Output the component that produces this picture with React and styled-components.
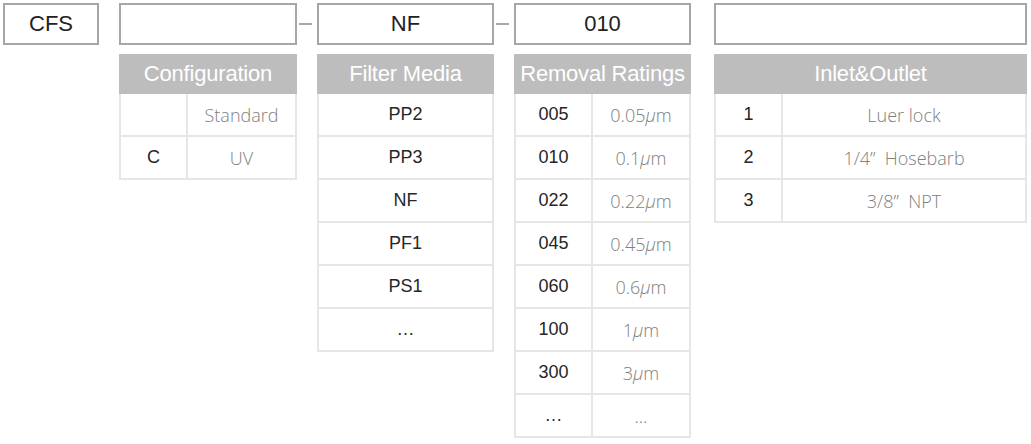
import React from 'react';
import styled, { createGlobalStyle } from 'styled-components';

const GlobalStyle = createGlobalStyle`
  body {
    margin: 0;
    background: #ffffff;
    font-family: 'Liberation Sans', Arial, sans-serif;
  }
`;

const segments = [
  {
    code: '',
    title: 'Configuration',
    width: 178,
    split: 65,
    joint: true,
    rows: [
      ['', 'Standard'],
      ['C', 'UV'],
    ],
  },
  {
    code: 'NF',
    title: 'Filter Media',
    width: 177,
    joint: true,
    rows: [['PP2'], ['PP3'], ['NF'], ['PF1'], ['PS1'], ['…']],
  },
  {
    code: '010',
    title: 'Removal Ratings',
    width: 177,
    split: 75,
    gapAfter: 23,
    rows: [
      ['005', '0.05', 'm'],
      ['010', '0.1', 'm'],
      ['022', '0.22', 'm'],
      ['045', '0.45', 'm'],
      ['060', '0.6', 'm'],
      ['100', '1', 'm'],
      ['300', '3', 'm'],
      ['…', '…'],
    ],
  },
  {
    code: '',
    title: 'Inlet&Outlet',
    width: 313,
    split: 65,
    rows: [
      ['1', 'Luer lock'],
      ['2', '1/4”  Hosebarb'],
      ['3', '3/8”  NPT'],
    ],
  },
];

const App = () => (
  <>
    <GlobalStyle />
    <Page>
      <Column $width={96}>
        <CodeBox>CFS</CodeBox>
      </Column>
      <Joint />
      {segments.map((seg, i) => (
        <React.Fragment key={seg.title}>
          <Column $width={seg.width}>
            <CodeBox>{seg.code}</CodeBox>
            <Header>{seg.title}</Header>
            <Table $split={seg.split}>
              {seg.rows.map((row, r) =>
                row.length === 1 ? (
                  <Cell key={r}>{row[0]}</Cell>
                ) : (
                  <React.Fragment key={r}>
                    <Cell>{row[0]}</Cell>
                    <Value>
                      {row[1]}
                      {row[2] && (
                        <>
                          <Mu>μ</Mu>
                          {row[2]}
                        </>
                      )}
                    </Value>
                  </React.Fragment>
                )
              )}
            </Table>
          </Column>
          {i < segments.length - 1 && (
            <Joint $line={seg.joint} $width={seg.gapAfter} />
          )}
        </React.Fragment>
      ))}
    </Page>
  </>
);

export default App;

const Page = styled.div`
  display: flex;
  align-items: flex-start;
  padding: 3px;
`;

const Column = styled.div`
  display: flex;
  flex-direction: column;
  flex: none;
  width: ${(p) => p.$width}px;
`;

const Joint = styled.div`
  flex: none;
  width: ${(p) => p.$width || 20}px;
  height: 42px;
  display: flex;
  align-items: center;
  &::before {
    content: '';
    display: ${(p) => (p.$line ? 'block' : 'none')};
    margin-left: 2px;
    width: 13px;
    height: 2px;
    background: #a8a8ac;
  }
`;

const CodeBox = styled.div`
  box-sizing: border-box;
  height: 42px;
  border: 2px solid #a6a6aa;
  display: flex;
  align-items: center;
  justify-content: center;
  font-size: 22px;
  color: #222222;
`;

const Header = styled.div`
  margin-top: 9px;
  height: 40px;
  background: #bdbdbd;
  color: #ffffff;
  font-size: 22px;
  display: flex;
  align-items: center;
  justify-content: center;
  white-space: nowrap;
  letter-spacing: -0.2px;
`;

const Table = styled.div`
  display: grid;
  grid-template-columns: ${(p) => (p.$split ? `${p.$split}px 1fr` : '1fr')};
  grid-auto-rows: 41px;
  gap: 2px;
  padding: 0 2px 2px 2px;
  background: #e6e6e6;
`;

const Cell = styled.div`
  background: #ffffff;
  display: flex;
  align-items: center;
  justify-content: center;
  font-size: 18px;
  color: #262626;
`;

const Value = styled(Cell)`
  font-family: 'Open Sans', 'Noto Sans', sans-serif;
  font-weight: 300;
  font-size: 18px;
  color: #808080;
  white-space: pre;
`;

const Mu = styled.span`
  font-style: italic;
`;
